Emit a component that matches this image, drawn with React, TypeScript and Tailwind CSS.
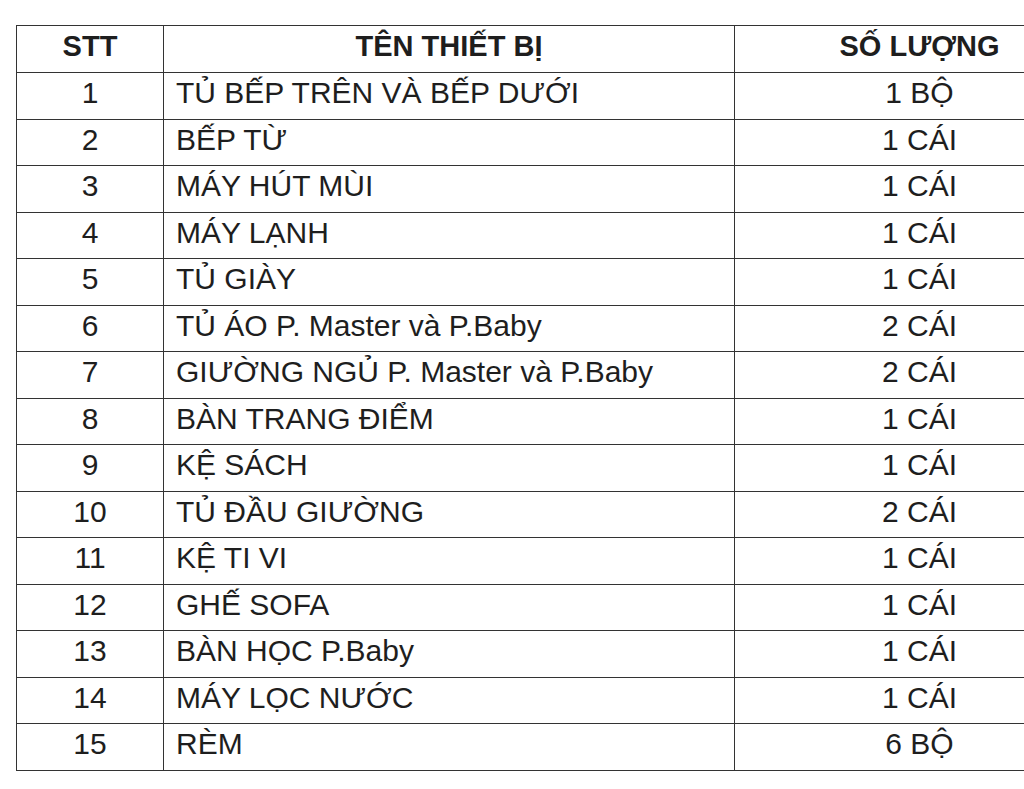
import React from 'react';

const rows: [string, string, string][] = [
    ['1', 'TỦ BẾP TRÊN VÀ BẾP DƯỚI', '1 BỘ'],
    ['2', 'BẾP TỪ', '1 CÁI'],
    ['3', 'MÁY HÚT MÙI', '1 CÁI'],
    ['4', 'MÁY LẠNH', '1 CÁI'],
    ['5', 'TỦ GIÀY', '1 CÁI'],
    ['6', 'TỦ ÁO P. Master và P.Baby', '2 CÁI'],
    ['7', 'GIƯỜNG NGỦ P. Master và P.Baby', '2 CÁI'],
    ['8', 'BÀN TRANG ĐIỂM', '1 CÁI'],
    ['9', 'KỆ SÁCH', '1 CÁI'],
    ['10', 'TỦ ĐẦU GIƯỜNG', '2 CÁI'],
    ['11', 'KỆ TI VI', '1 CÁI'],
    ['12', 'GHẾ SOFA', '1 CÁI'],
    ['13', 'BÀN HỌC P.Baby', '1 CÁI'],
    ['14', 'MÁY LỌC NƯỚC', '1 CÁI'],
    ['15', 'RÈM', '6 BỘ'],
];

export default function App() {
    return (
        <div className="w-[1024px] h-[789px] overflow-hidden bg-white pt-[25px] pl-[16px] font-['Liberation_Sans',Arial,sans-serif] text-[#1e1e1e]">
            <table className="border-collapse table-fixed w-[1088px]">
                <colgroup>
                    <col className="w-[147px]" />
                    <col className="w-[571px]" />
                    <col className="w-[370px]" />
                </colgroup>
                <thead>
                    <tr className="h-[47px]">
                        <th className="border border-[#333] text-[29px] font-bold text-center leading-none pb-[5px]">STT</th>
                        <th className="border border-[#333] text-[29px] font-bold text-center leading-none pb-[5px]">TÊN THIẾT BỊ</th>
                        <th className="border border-[#333] text-[29px] font-bold text-center leading-none pb-[5px]">SỐ LƯỢNG</th>
                    </tr>
                </thead>
                <tbody>
                    {rows.map(([n, name, qty]) => (
                        <tr key={n} className="h-[46.5px]">
                            <td className="border border-[#333] text-[30px] text-center leading-none pb-[5px]">{n}</td>
                            <td className="border border-[#333] text-[30px] pl-[12px] leading-none pb-[5px] whitespace-nowrap">{name}</td>
                            <td className="border border-[#333] text-[30px] text-center leading-none pb-[5px]">{qty}</td>
                        </tr>
                    ))}
                </tbody>
            </table>
        </div>
    );
}
